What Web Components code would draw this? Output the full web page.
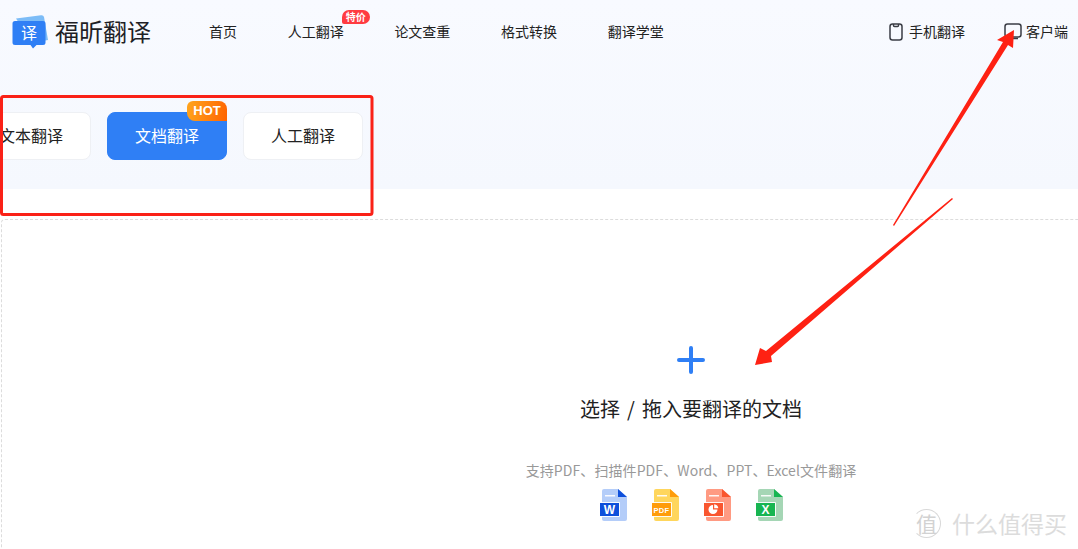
<!DOCTYPE html>
<html lang="zh-CN">
<head>
<meta charset="utf-8">
<title>福昕翻译</title>
<style>
  html, body { margin: 0; height: 100%; overflow: hidden; background: #fff; }
  body { font-family: "Noto Sans CJK SC", "Noto Sans", sans-serif; }
</style>
</head>
<body>
<translate-page>
  <site-header slot="hero">
    <nav-link>首页</nav-link>
    <nav-link badge="特价">人工翻译</nav-link>
    <nav-link>论文查重</nav-link>
    <nav-link>格式转换</nav-link>
    <nav-link>翻译学堂</nav-link>
  </site-header>
  <tab-bar slot="hero">
    <tab-button>文本翻译</tab-button>
    <tab-button active hot>文档翻译</tab-button>
    <tab-button>人工翻译</tab-button>
  </tab-bar>
  <drop-zone slot="body"></drop-zone>
</translate-page>
<markup-layer></markup-layer>
<smzdm-mark></smzdm-mark>

<script>
class TranslatePage extends HTMLElement {
  constructor() {
    super();
    this.attachShadow({ mode: "open" }).innerHTML = `
      <style>
        :host { display: block; width: 1078px; height: 549px; overflow: hidden; }
        .hero { height: 189px; background: linear-gradient(#f8faff, #f5f8fe); }
        .body { padding: 30px 0 0 1px; }
      </style>
      <div class="hero"><slot name="hero"></slot></div>
      <div class="body"><slot name="body"></slot></div>
    `;
  }
}

class SiteHeader extends HTMLElement {
  constructor() {
    super();
    this.attachShadow({ mode: "open" }).innerHTML = `
      <style>
        :host { display: flex; align-items: center; height: 62px; padding: 0 10px 0 12px; color: #222; font-size: 14px; }
        .logo { display: flex; align-items: center; gap: 7px; width: 197px; flex: none; }
        .logo span { font-size: 24px; color: #1f1f26; line-height: 32px; }
        .nav { display: flex; gap: 50.7px; }
        .right { display: flex; align-items: center; margin-left: auto; }
        .tool { display: flex; align-items: center; gap: 6px; }
        .tool + .tool { margin-left: 39px; gap: 4px; }
        svg { display: block; flex: none; }
        .tool svg { margin-top: 2px; }
      </style>
      <div class="logo">
        <svg width="36" height="36" viewBox="0 0 36 36">
          <path d="M4 5.500 L29 2.200 Q31.500 1.900 32 4 L36 27 L20 30 Z" fill="#7cbcf7"/>
          <path d="M3 8 H31 Q33.500 8 33.500 10.500 V29.500 Q33.500 32 31 32 H24.500 L21 35.500 L18.500 32 H3 Q0.500 32 0.500 29.500 V10.500 Q0.500 8 3 8 Z" fill="#2f7ff5"/>
          <text x="17" y="26" text-anchor="middle" font-size="16" fill="#fff" font-family="Noto Sans CJK SC, sans-serif">译</text>
        </svg>
        <span>福昕翻译</span>
      </div>
      <div class="nav"><slot></slot></div>
      <div class="right">
        <div class="tool">
          <svg width="14" height="18" viewBox="0 0 14 18" fill="none" stroke="#3a3d45" stroke-width="1.500">
            <rect x="1" y="1" width="12" height="16" rx="2.500"/>
            <path d="M4.500 1 V2.500 Q4.500 3.500 5.500 3.500 H8.500 Q9.500 3.500 9.500 2.500 V1"/>
          </svg>
          <span>手机翻译</span>
        </div>
        <div class="tool">
          <svg width="18" height="18" viewBox="0 0 18 18" fill="none" stroke="#3a3d45" stroke-width="1.500">
            <rect x="1" y="1" width="16" height="13" rx="2.500"/>
            <path d="M9 15.500 H14"/>
          </svg>
          <span>客户端</span>
        </div>
      </div>
    `;
  }
}

class NavLink extends HTMLElement {
  constructor() {
    super();
    const badge = this.getAttribute("badge");
    this.attachShadow({ mode: "open" }).innerHTML = `
      <style>
        :host { display: block; position: relative; line-height: 22px; white-space: nowrap; }
        .badge { position: absolute; left: 54px; top: -10px; width: 28px; height: 14px; line-height: 14px; text-align: center;
          background: #ff3b41; color: #fff; font-size: 10px; font-weight: 700; border-radius: 7px 7px 7px 2px; }
      </style>
      <slot></slot>${badge ? `<span class="badge">${badge}</span>` : ""}
    `;
  }
}

class TabBar extends HTMLElement {
  constructor() {
    super();
    this.attachShadow({ mode: "open" }).innerHTML = `
      <style>
        :host { display: flex; gap: 16px; margin-left: -29px; padding-top: 50px; }
      </style>
      <slot></slot>
    `;
  }
}

class TabButton extends HTMLElement {
  constructor() {
    super();
    const hot = this.hasAttribute("hot");
    this.attachShadow({ mode: "open" }).innerHTML = `
      <style>
        :host { display: block; position: relative; box-sizing: border-box; width: 120px; height: 48px; line-height: 45px;
          text-align: center; font-size: 16px; color: #222; background: #fff; border: 1px solid #eef0f4; border-radius: 8px; }
        :host([active]) { background: #2f7ff5; border-color: #2f7ff5; color: #fff; }
        .hot { position: absolute; right: -1px; top: -12px; width: 40px; height: 20px;
          background: linear-gradient(100deg, #ffa51e, #ff6400); color: #fff;
          font: 700 13px/20px "Liberation Sans", sans-serif; border-radius: 6px 8px 0 8px; }
      </style>
      <slot></slot>${hot ? `<span class="hot">HOT</span>` : ""}
    `;
  }
}

class DropZone extends HTMLElement {
  constructor() {
    super();
    this.attachShadow({ mode: "open" }).innerHTML = `
      <style>
        :host { display: flex; flex-direction: column; align-items: center; box-sizing: border-box; width: 1380px; height: 400px;
          border: 1px dashed #dcdcdc; border-bottom: 0; border-radius: 4px 4px 0 0; padding-top: 126px; }
        svg.plus { display: block; }
        .title { margin-top: 21px; font-size: 20px; line-height: 28px; color: #222; word-spacing: 2.500px; }
        .sub { margin-top: 37px; font-size: 14px; line-height: 20px; color: #999; letter-spacing: 0.09px; }
        .files { display: flex; gap: 25px; margin-top: 9px; }
      </style>
      <svg class="plus" width="28" height="28" viewBox="0 0 28 28" fill="none" stroke="#2f7ff5" stroke-width="4" stroke-linecap="round">
        <path d="M14 2 V26 M2 14 H26"/>
      </svg>
      <div class="title">选择 / 拖入要翻译的文档</div>
      <div class="sub">支持PDF、扫描件PDF、Word、PPT、Excel文件翻译</div>
      <div class="files">
        <file-icon label="W" page="#b4cdf9" main="#0d4fdb" fold="#0d4fdb"></file-icon>
        <file-icon label="PDF" page="#ffd65c" main="#ff9c0a" fold="#ff9c0a"></file-icon>
        <file-icon pie page="#ff9a82" main="#f9562f" fold="#f9562f"></file-icon>
        <file-icon label="X" page="#a5d6b5" main="#17b551" fold="#17b551"></file-icon>
      </div>
    `;
  }
}

class FileIcon extends HTMLElement {
  constructor() {
    super();
    const page = this.getAttribute("page");
    const main = this.getAttribute("main");
    const fold = this.getAttribute("fold");
    const label = this.getAttribute("label") || "";
    const wide = label.length > 1;
    const glyph = this.hasAttribute("pie")
      ? `<path d="M9 16 V20.500 H13.500 A4.500 4.500 0 1 1 9 16 Z" fill="#fff"/><path d="M10.200 15.200 A4.500 4.500 0 0 1 14.300 19.300 H10.200 Z" fill="#fff"/>`
      : `<text x="9.500" y="${wide ? 23.500 : 25}" text-anchor="middle" font-size="${wide ? 7.500 : 12}" font-weight="700" fill="#fff" font-family="Liberation Sans, sans-serif"${wide ? ' letter-spacing="0.300"' : ""}>${label}</text>`;
    this.attachShadow({ mode: "open" }).innerHTML = `
      <style>
        :host { display: block; width: 27px; height: 32px; }
        svg { display: block; }
      </style>
      <svg width="27" height="32" viewBox="0 0 27 32">
        <path d="M4 0 H18 L27 8 V30 Q27 32 25 32 H4 Q2 32 2 30 V2 Q2 0 4 0 Z" fill="${page}"/>
        <path d="M18 0 L27 8 H18 Z" fill="${fold}"/>
        <rect x="5" y="6" width="10" height="1.500" fill="#fff" opacity=".9"/>
        <rect x="0" y="14" width="19" height="13" fill="${main}"/>
        <path d="M19.500 13.500 V27.500 H2" fill="none" stroke="#fff" stroke-width="1" opacity=".9"/>
        <path d="M0 13.500 H19.500" fill="none" stroke="#fff" stroke-width="1" opacity=".9"/>
        ${glyph}
      </svg>
    `;
  }
}

class MarkupLayer extends HTMLElement {
  constructor() {
    super();
    this.attachShadow({ mode: "open" }).innerHTML = `
      <style>
        :host { display: block; position: absolute; left: 0; top: 0; width: 1078px; height: 549px; pointer-events: none; }
        svg { display: block; }
      </style>
      <svg width="1078" height="549" viewBox="0 0 1078 549">
        <rect x="1.500" y="96.500" width="370.500" height="118" rx="2" fill="none" stroke="#fa2117" stroke-width="3"/>
        <polygon fill="#fe2113" points="893,225 1003,42 997,40 1014,30 1013,48 1008,45 894,226"/>
        <polygon fill="#fe2113" points="952,198 953,199 771,356 772,362 755,365 760,348 766,351"/>
      </svg>
    `;
  }
}

class SmzdmMark extends HTMLElement {
  constructor() {
    super();
    this.attachShadow({ mode: "open" }).innerHTML = `
      <style>
        :host { display: flex; align-items: center; gap: 11px; position: absolute; left: 912px; top: 506px; height: 34px;
          color: #dcdcdc; font-size: 23px; line-height: 34px; white-space: nowrap; }
        .seal { display: flex; align-items: center; justify-content: center; box-sizing: border-box; width: 29px; height: 29px;
          border: 1.500px solid #d8d8d8; border-left-color: transparent; border-radius: 50%; font-size: 21px; color: #d2d2d2; }
      </style>
      <span class="seal">值</span><span>什么值得买</span>
    `;
  }
}

customElements.define("translate-page", TranslatePage);
customElements.define("site-header", SiteHeader);
customElements.define("nav-link", NavLink);
customElements.define("tab-bar", TabBar);
customElements.define("tab-button", TabButton);
customElements.define("drop-zone", DropZone);
customElements.define("file-icon", FileIcon);
customElements.define("markup-layer", MarkupLayer);
customElements.define("smzdm-mark", SmzdmMark);
</script>
</body>
</html>
